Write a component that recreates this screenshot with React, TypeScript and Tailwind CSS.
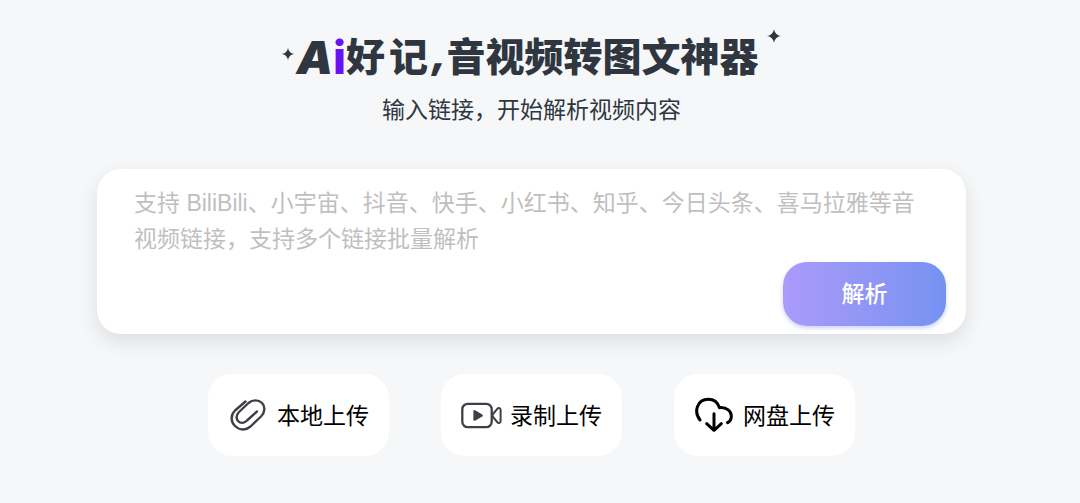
import React from 'react';

const PLACEHOLDER = '支持 BiliBili、小宇宙、抖音、快手、小红书、知乎、今日头条、喜马拉雅等音视频链接，支持多个链接批量解析';

const Star = ({ className }: { className: string }) => (
  <svg viewBox="0 0 14 14" className={className} fill="currentColor" aria-hidden="true">
    <path d="M7 0 C7.8 4.2 9.8 6.2 14 7 C9.8 7.8 7.8 9.8 7 14 C6.2 9.8 4.2 7.8 0 7 C4.2 6.2 6.2 4.2 7 0 Z" />
  </svg>
);

const ClipIcon = () => (
  <svg viewBox="0 0 36 34" className="w-9 shrink-0 text-[#3d4045]" fill="none" stroke="currentColor" strokeWidth="2.4" strokeLinecap="round" strokeLinejoin="round" aria-hidden="true">
    <path d="M15.500 3.500 L5 12.500 C0.500 17 0.500 23.500 5 28 C9.500 32.500 16 32.500 20.500 28.500 L31 18.500 C35 14.500 35.500 8.500 32 5 C28.500 1.500 22.500 1.500 18.500 5 L9 14 C6 17 6 21 8 23 C10.500 25.500 14 25.500 17 22.500 L27 13.500" />
  </svg>
);

const CameraIcon = () => (
  <svg viewBox="0 0 41 27" className="w-[41px] shrink-0 text-[#3d4045]" fill="none" stroke="currentColor" strokeWidth="2.3" strokeLinejoin="round" aria-hidden="true">
    <rect x="1.300" y="1.800" width="29.400" height="23.400" rx="5.500" />
    <path d="M13.500 9.300 V17.700 L20.700 13.500 Z" fill="currentColor" />
    <path d="M32 12 L36.300 6.800 C37.800 5.300 39.600 6 39.600 8 V19 C39.600 21 37.800 21.700 36.300 20.200 L32 15 C31.300 14 31.300 13 32 12 Z" strokeWidth="2" />
  </svg>
);

const CloudIcon = () => (
  <svg viewBox="0 0 120 114" className="w-10 shrink-0 text-black" fill="none" stroke="currentColor" strokeWidth="9" strokeLinecap="round" strokeLinejoin="round" aria-hidden="true">
    <path d="M18 72 C-2 46 10 10 43 10 C58 10 71 19 76 35 C99 33 112 46 112 60 C112 69 108 76 101 80" />
    <path d="M60 53 V103 M38 83 L60 103 L82 83" />
  </svg>
);

const UPLOADS = [
  { title: '本地上传', icon: <ClipIcon />, spacing: 'pl-[22px] pr-5' },
  { title: '录制上传', icon: <CameraIcon />, spacing: 'px-5' },
  { title: '网盘上传', icon: <CloudIcon />, spacing: 'px-5' },
];

const App: React.FC = () => {
  return (
    <main className="min-h-screen bg-[#f5f7f9] pr-[17px] pt-7 pb-12 font-['Liberation_Sans','Noto_Sans_CJK_SC',sans-serif] text-[23px] text-[#30363f]">
      {/* Title */}
      <h1 className="flex h-[52px] items-center justify-center text-[39px] leading-[52px] font-black font-['Noto_Sans_CJK_SC',sans-serif]">
        <Star className="mr-0.5 w-3" />
        <span className="flex pt-1.5 font-['Inter',sans-serif] text-[46px]">
          <span className="italic">A</span>
          <span className="font-extrabold text-[#6a11f5]">i</span>
        </span>
        <span className="mr-1">好</span>
        <span className="mr-1">记</span>
        <span className="font-['Inter',sans-serif] italic">,</span>
        <span>音视频转图文神器</span>
        <Star className="mt-px ml-2 w-3.5 self-start" />
      </h1>
      <p className="mt-3 text-center leading-9">输入链接，开始解析视频内容</p>

      {/* Link form */}
      <form className="mx-auto mt-[41px] flex w-full max-w-[869px] flex-col rounded-3xl bg-white pb-2 shadow-[0_8px_20px_rgba(0,0,0,0.1)]" onSubmit={(e) => e.preventDefault()}>
        <textarea
          rows={2}
          aria-label="视频链接"
          placeholder={PLACEHOLDER}
          className="h-[93px] w-full resize-none overflow-hidden pt-4 pr-8 pl-[37px] leading-9 outline-none placeholder:text-[#bfbfbf]"
        />
        <button type="submit" className="mr-5 h-16 w-[163px] self-end rounded-3xl bg-linear-to-r from-[#ab9afa] to-[#7592f1] font-medium text-white shadow-[0_2px_4px_rgba(117,146,241,0.4)]">
          解析
        </button>
      </form>

      {/* Upload options */}
      <div className="mt-10 flex flex-wrap justify-center gap-[52px]">
        {UPLOADS.map((item) => (
          <button key={item.title} type="button" className={`flex h-[82px] w-[181px] items-center justify-between rounded-3xl bg-white whitespace-nowrap text-black ${item.spacing}`}>
            {item.icon}
            <span className="pt-0.5">{item.title}</span>
          </button>
        ))}
      </div>
    </main>
  );
};

export default App;
